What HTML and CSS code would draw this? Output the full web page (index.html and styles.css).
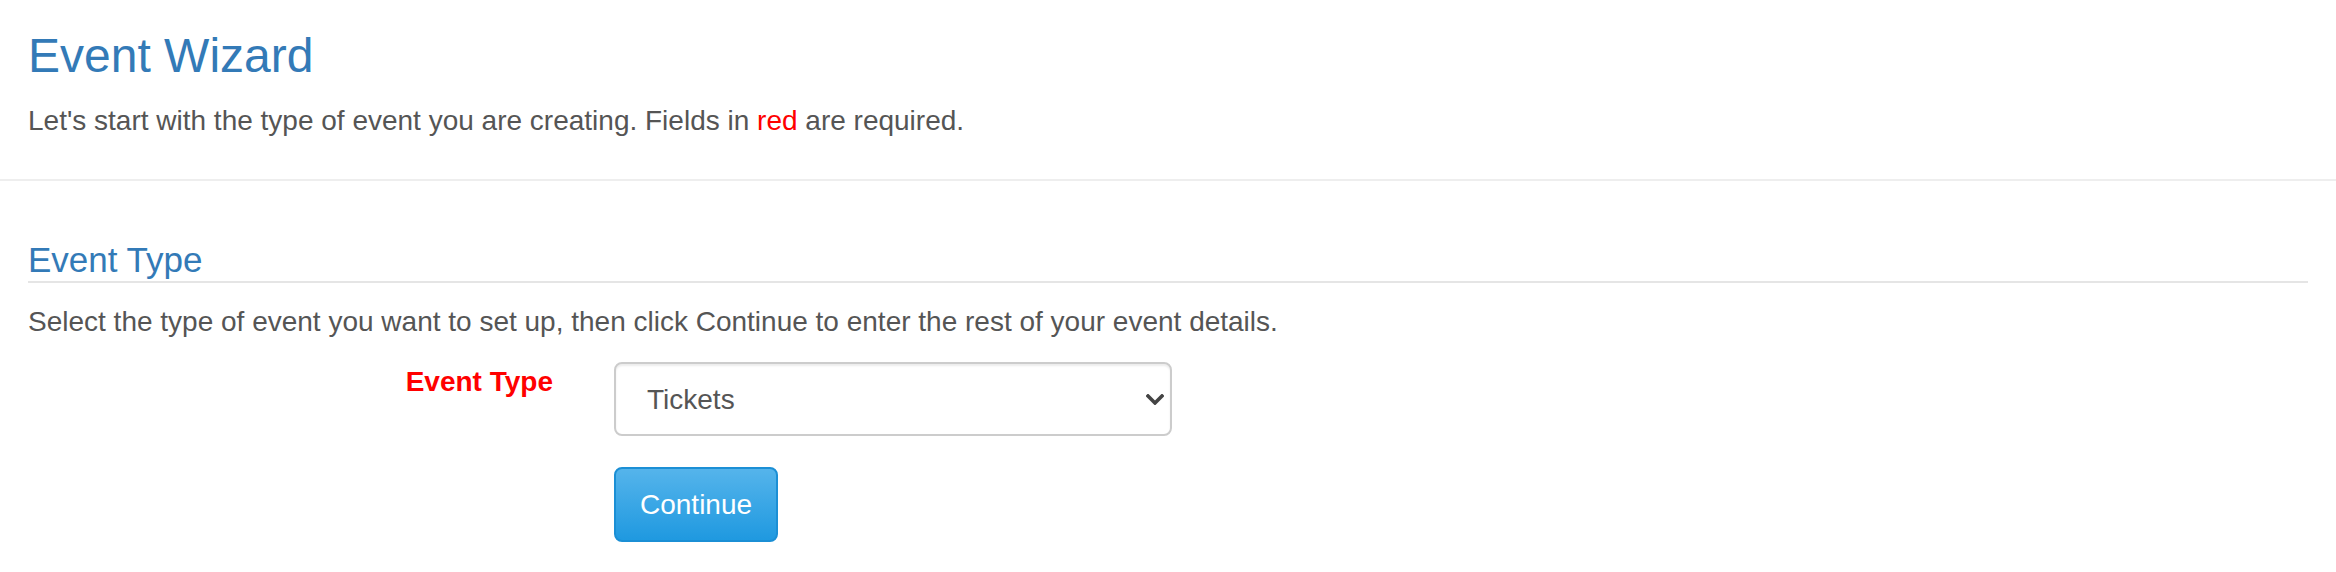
FILE: index.html
```html
<!DOCTYPE html>
<html lang="en">
<head>
<meta charset="utf-8">
<title>Event Wizard</title>
<link rel="stylesheet" href="styles.css">
</head>
<body>
<header class="page-head">
  <h1 class="page-title">Event Wizard</h1>
  <p class="lead-text">Let's start with the type of event you are creating. Fields in <span class="req">red</span> are required.</p>
</header>
<hr class="divider">
<main class="content">
  <form class="wizard-form">
    <section class="section">
      <h2 class="section-title">Event Type</h2>
      <p class="section-help">Select the type of event you want to set up, then click Continue to enter the rest of your event details.</p>
      <div class="form-row">
        <label class="field-label req-label" for="eventType">Event Type</label>
        <div class="select-wrap">
          <select id="eventType" class="field-select">
            <option>Tickets</option>
            <option>Registration</option>
            <option>Donation</option>
          </select>
          <svg class="select-arrow" width="18" height="11" viewBox="0 0 18 11" aria-hidden="true">
            <path d="M2 2 L9 9 L16 2" fill="none" stroke="#444" stroke-width="3.6" stroke-linecap="square" stroke-linejoin="miter"/>
          </svg>
        </div>
        <div class="actions">
          <button type="button" class="btn-continue">Continue</button>
        </div>
      </div>
    </section>
  </form>
</main>
</body>
</html>
```

FILE: styles.css
```css
html, body {
  margin: 0;
  padding: 0;
  background: #fff;
}

body {
  font-family: "Liberation Sans", Arial, sans-serif;
  font-size: 28px;
  line-height: 40px;
  color: #555;
}

.page-head {
  padding: 30px 28px 0;
}

.page-title {
  margin: 0;
  font-size: 48px;
  line-height: 1.1;
  font-weight: 400;
  color: #337ab7;
}

.lead-text {
  margin: 18px 0 0;
}

.req {
  color: #f00;
}

.divider {
  margin: 38px 0 0;
  border: 0;
  border-top: 2px solid #eee;
  height: 0;
}

.content {
  padding: 0 28px;
  display: flow-root;
}

.wizard-form {
  margin: 0;
}

.section {
  margin: 0;
  padding: 0;
}

.section-title {
  margin: 60px 0 0;
  padding: 0 0 2px;
  font-size: 35px;
  line-height: 1.1;
  font-weight: 400;
  color: #337ab7;
  border-bottom: 2px solid #e5e5e5;
}

.section-help {
  margin: 19px 0 0;
}

.form-row {
  margin-top: 20px;
  display: grid;
  grid-template-columns: 525px 558px;
  column-gap: 61px;
  row-gap: 31px;
  align-items: start;
}

.field-label {
  text-align: right;
  font-weight: 700;
  padding-top: 0;
}

.req-label {
  color: #f00;
}

.select-wrap {
  position: relative;
  height: 74px;
}

.field-select {
  -webkit-appearance: none;
  appearance: none;
  display: block;
  width: 100%;
  height: 74px;
  box-sizing: border-box;
  padding: 0 50px 0 31px;
  font-family: "Liberation Sans", Arial, sans-serif;
  font-size: 28px;
  color: #555;
  background: #fff;
  border: 2px solid #ccc;
  border-radius: 8px;
  box-shadow: inset 0 2px 2px rgba(0, 0, 0, 0.075);
  outline: none;
}

.select-arrow {
  position: absolute;
  right: 8px;
  top: 32px;
  pointer-events: none;
}

.actions {
  grid-column: 2;
}

.btn-continue {
  display: inline-block;
  box-sizing: border-box;
  height: 75px;
  padding: 0 24px;
  font-family: "Liberation Sans", Arial, sans-serif;
  font-size: 28px;
  line-height: 40px;
  color: #fff;
  background: linear-gradient(to bottom, #55b4eb 0%, #1f99e0 100%);
  border: 2px solid #1b8fd5;
  border-radius: 8px;
  cursor: pointer;
}
```
